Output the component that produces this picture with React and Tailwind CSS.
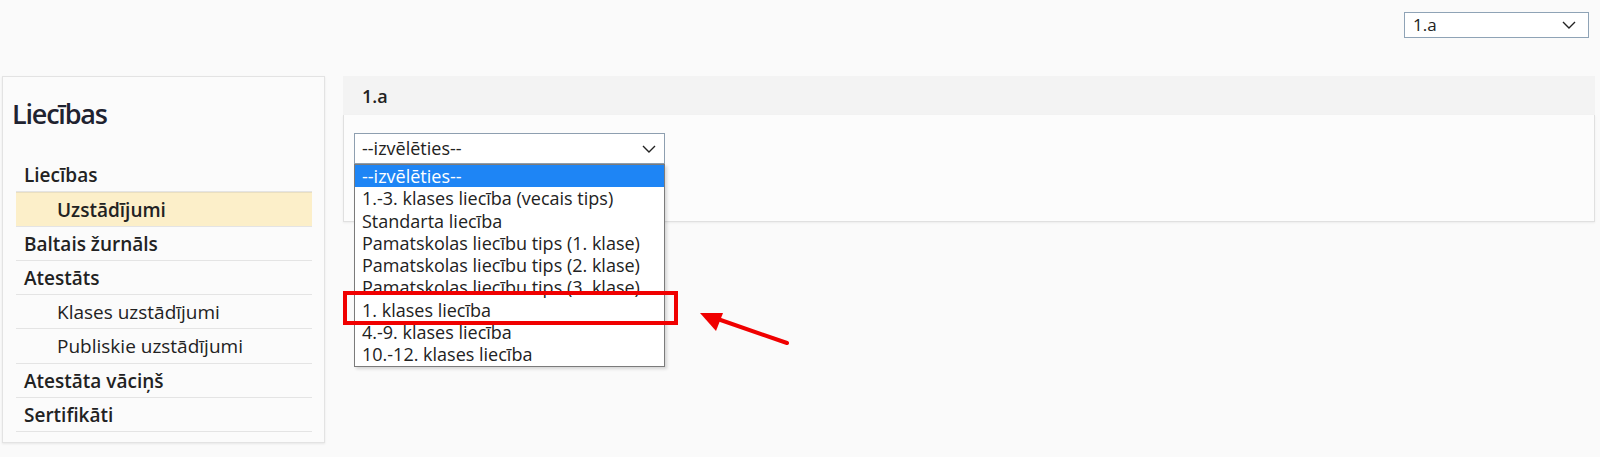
import React from "react"

const menu = [
    { label: "Liecības", sub: false },
    { label: "Uzstādījumi", sub: true, active: true },
    { label: "Baltais žurnāls", sub: false },
    { label: "Atestāts", sub: false },
    { label: "Klases uzstādījumi", sub: true },
    { label: "Publiskie uzstādījumi", sub: true },
    { label: "Atestāta vāciņš", sub: false },
    { label: "Sertifikāti", sub: false },
]

const options = [
    "--izvēlēties--",
    "1.-3. klases liecība (vecais tips)",
    "Standarta liecība",
    "Pamatskolas liecību tips (1. klase)",
    "Pamatskolas liecību tips (2. klase)",
    "Pamatskolas liecību tips (3. klase)",
    "1. klases liecība",
    "4.-9. klases liecība",
    "10.-12. klases liecība",
]

function Chevron() {
    return (
        <svg width="14" height="8" viewBox="0 0 14 8" fill="none" stroke="#222" strokeWidth="1.4">
            <polyline points="1 1 7 7 13 1" />
        </svg>
    )
}

export default function App() {
    return (
        <div className="min-h-[457px] bg-[#fafafa] text-[#222] font-['Open_Sans',sans-serif]">
            {/* top class picker */}
            <div className="flex justify-end h-[76px] pt-3 pr-[11px]">
                <div className="w-[185px] h-[26px] flex items-center justify-between border border-[#8fa3b6] bg-white pl-2 pr-3 text-[17px]">
                    <span>1.a</span>
                    <Chevron />
                </div>
            </div>

            <div className="flex items-start gap-[18px] pl-[2px] pr-[5px]">
                {/* sidebar */}
                <aside className="w-[323px] shrink-0 border border-[#e3e3e3] bg-[#fbfbfb] shadow-[0_1px_2px_rgba(0,0,0,0.08)] pt-[20px] pb-[10px] pl-[13px] pr-[12px]">
                    <h1 className="-ml-[4px] text-[27px] leading-[34px] font-semibold tracking-[-1.2px] text-[#1f2330] mb-[27px]">Liecības</h1>
                    <ul>
                        {menu.map((m, i) => (
                            <li
                                key={i}
                                className={
                                    "h-[34.25px] leading-[34px] border-b border-[#e4e4e4] text-[19px] " +
                                    (m.sub ? "pl-[41px] " : "pl-[8px] font-semibold ") +
                                    (m.active ? "bg-[#fcefc9] font-semibold border-t border-t-[#eadfc0]" : "")
                                }
                            >
                                {m.label}
                            </li>
                        ))}
                    </ul>
                </aside>

                {/* main panel */}
                <main className="relative flex-1">
                    <div className="h-[39px] bg-[#f3f3f3] pl-[19px] flex items-center pt-[2px]">
                        <span className="text-[18px] font-semibold">1.a</span>
                    </div>
                    <div className="h-[107px] bg-[#fcfcfc] border border-t-0 border-[#e0e0e0] shadow-[0_1px_2px_rgba(0,0,0,0.06)] pt-[18px] pl-[10px]">
                        <div className="w-[311px] h-[31px] flex items-center justify-between border border-[#8e9fb0] bg-white pl-[7px] pr-[8px] text-[18px]">
                            <span>--izvēlēties--</span>
                            <Chevron />
                        </div>
                    </div>

                    {/* open option list */}
                    <ul className="absolute left-[11px] top-[88px] w-[311px] border border-[#7b7b7b] bg-white shadow-[2px_2px_3px_rgba(0,0,0,0.15)] text-[18px]">
                        {options.map((o, i) => (
                            <li
                                key={i}
                                className={"h-[22.3px] leading-[22.3px] pl-[7px] whitespace-nowrap " + (i === 0 ? "bg-[#1e85f5] text-white" : "")}
                            >
                                {o}
                            </li>
                        ))}
                    </ul>

                    {/* annotation */}
                    <div className="absolute left-0 top-[215px] w-[335px] h-[34px] border-4 border-[#f00000]"></div>
                    <svg className="absolute left-[347px] top-[224px]" width="105" height="50" viewBox="0 0 105 50">
                        <line x1="97" y1="43" x2="22" y2="17" stroke="#f00000" strokeWidth="4" strokeLinecap="round" />
                        <polygon points="10,13 33,13 26,31" fill="#f00000" />
                    </svg>
                </main>
            </div>
        </div>
    )
}
